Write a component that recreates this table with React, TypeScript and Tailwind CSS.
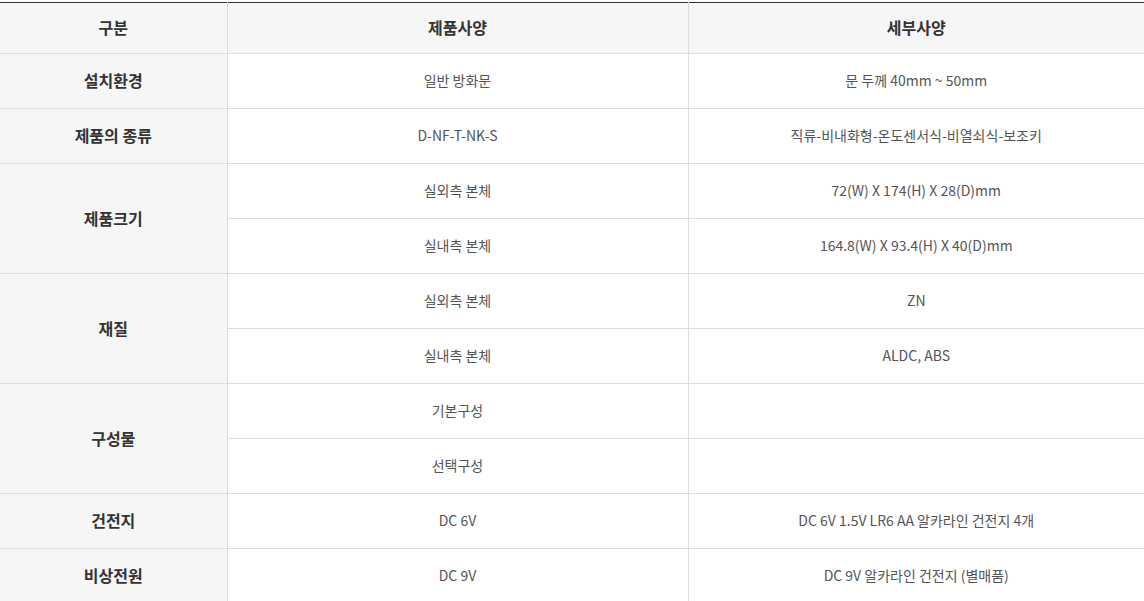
import React from "react";

type Row = { label: string; items: [string, string][] };

const rows: Row[] = [
  { label: "설치환경", items: [["일반 방화문", "문 두께 40mm ~ 50mm"]] },
  { label: "제품의 종류", items: [["D-NF-T-NK-S", "직류-비내화형-온도센서식-비열쇠식-보조키"]] },
  {
    label: "제품크기",
    items: [
      ["실외측 본체", "72(W) X 174(H) X 28(D)mm"],
      ["실내측 본체", "164.8(W) X 93.4(H) X 40(D)mm"],
    ],
  },
  {
    label: "재질",
    items: [
      ["실외측 본체", "ZN"],
      ["실내측 본체", "ALDC, ABS"],
    ],
  },
  {
    label: "구성물",
    items: [
      ["기본구성", ""],
      ["선택구성", ""],
    ],
  },
  { label: "건전지", items: [["DC 6V", "DC 6V 1.5V LR6 AA 알카라인 건전지 4개"]] },
  { label: "비상전원", items: [["DC 9V", "DC 9V 알카라인 건전지 (별매품)"]] },
];

export default function App() {
  return (
    <div
      className="w-[1144px] bg-white pt-[2px]"
      style={{ fontFamily: '"Noto Sans CJK KR", "Noto Sans", sans-serif' }}
    >
      <table className="w-full table-fixed border-collapse border-t border-t-[#333]">
        <colgroup>
          <col className="w-[227px]" />
          <col className="w-[461px]" />
          <col />
        </colgroup>
        <thead>
          <tr className="h-[51px] bg-[#f6f6f6]">
            <th className="border-b border-r border-[#dddddd] pb-[2px] text-[16px] font-bold text-[#333]">구분</th>
            <th className="border-b border-r border-[#dddddd] pb-[2px] text-[16px] font-bold text-[#333]">제품사양</th>
            <th className="border-b border-[#dddddd] pb-[2px] text-[16px] font-bold text-[#333]">세부사양</th>
          </tr>
        </thead>
        <tbody>
          {rows.map((r) =>
            r.items.map((it, i) => (
              <tr key={r.label + i} className="h-[55px]">
                {i === 0 && (
                  <th
                    rowSpan={r.items.length}
                    className="border-b border-r border-[#dddddd] bg-[#f6f6f6] pb-[2px] text-[16px] font-bold text-[#333]"
                  >
                    {r.label}
                  </th>
                )}
                <td className="border-b border-r border-[#dddddd] pb-[2px] text-center text-[14px] text-[#555]">{it[0]}</td>
                <td className="border-b border-[#dddddd] pb-[2px] text-center text-[14px] text-[#555]">{it[1]}</td>
              </tr>
            ))
          )}
        </tbody>
      </table>
    </div>
  );
}
